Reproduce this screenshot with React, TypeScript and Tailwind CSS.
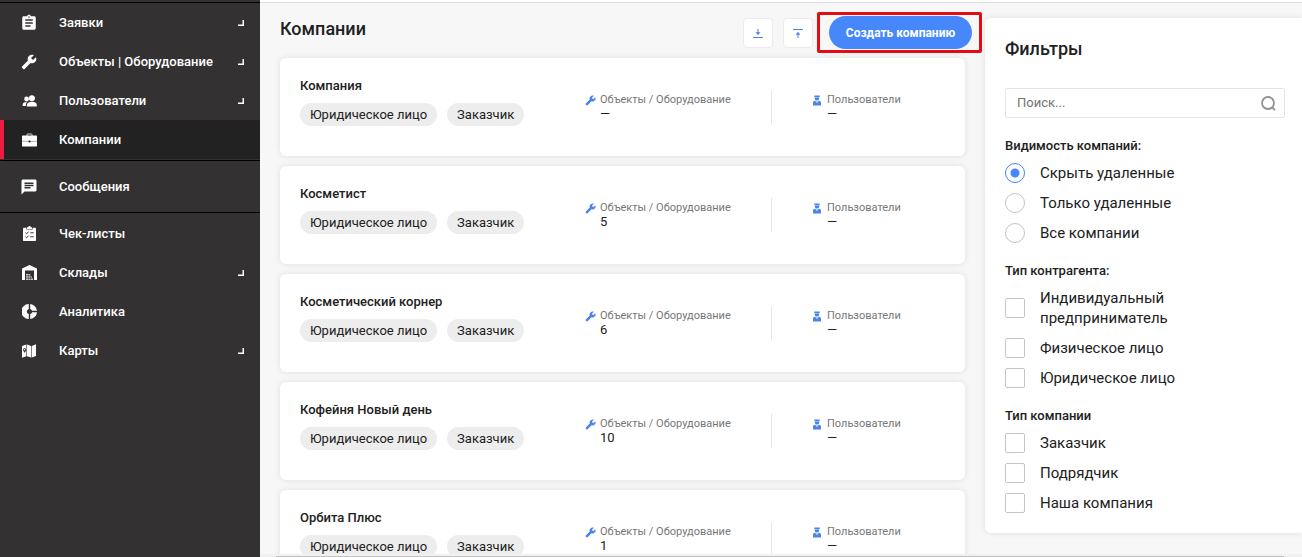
import React from "react";
import { MdAssignment, MdBuild, MdChat } from "react-icons/md";

function PeopleIcon() {
  return (
    <svg viewBox="0 0 15 12" className="h-3 w-[15px]" fill="currentColor" aria-hidden="true">
      <circle cx="4.6" cy="4" r="2.4" />
      <circle cx="9.9" cy="3.3" r="3" />
      <path d="M5 7.1C2.600 6.700.7 8 .7 9.500V11h3.200c0-1.800.2-2.900 1.100-3.900z" />
      <path d="M4.900 11.500V10c0-2 2.300-3.200 5-3.200s4.900 1.200 4.900 3.200v1.500z" />
    </svg>
  );
}

function BriefcaseIcon() {
  return (
    <svg viewBox="0 0 15 14" className="h-[14px] w-[15px]" aria-hidden="true">
      <path fill="none" stroke="currentColor" strokeOpacity=".8" d="M4.900 3V1.800c0-.5.300-.8.800-.8h3.600c.5 0 .8.300.8.800V3" />
      <path fill="currentColor" d="M1 2.500h13c.600 0 1 .4 1 1v9c0 .6-.4 1-1 1H1c-.600 0-1-.4-1-1v-9c0-.6.400-1 1-1z" />
      <path stroke="#222222" strokeOpacity=".5" strokeWidth=".7" d="M0 8.300h15" />
      <circle cx="7.500" cy="8.500" r="1.100" fill="#222222" />
    </svg>
  );
}

function ChecklistIcon() {
  return (
    <svg viewBox="0 0 13 15" className="h-[15px] w-[13px]" aria-hidden="true">
      <path fill="currentColor" d="M1 1.800h2.400V3.500h6.200V1.800H12c.600 0 1 .4 1 1V14c0 .6-.4 1-1 1H1c-.600 0-1-.4-1-1V2.800c0-.6.400-1 1-1z" />
      <path fill="currentColor" d="M4 2.900V1.300h1.200C5.300.5 5.800 0 6.500 0s1.200.5 1.300 1.300H9v1.600z" />
      <path fill="none" stroke="#333132" strokeWidth="1" d="M2.400 6.700l1.200 1.100 2-2.200M2.400 10.700l1.200 1.100 2-2.200M7.300 6.800h3.400M7.300 10.800h3.400" />
    </svg>
  );
}

function WarehouseIcon() {
  return (
    <svg viewBox="0 0 15 15" className="size-[15px]" fill="currentColor" aria-hidden="true">
      <path d="M0 15V3.500L7.500 0 15 3.500V15h-3V5.600H3V15z" />
      <path d="M4 9h2v1.600H4zM4 11.200h2v1.600H4zM4 13.400h2V15H4zM6.400 9h1.900v1.600H6.400zM6.400 11.200h1.900v1.600H6.400zM6.400 13.400h1.900V15H6.400zM8.800 11.200h1v1.600h-1zM8.800 13.400H11V15H8.800z" opacity=".75" />
    </svg>
  );
}

function DonutIcon() {
  return (
    <svg viewBox="0 0 15 15" className="size-[15px]" fill="currentColor" aria-hidden="true">
      <path d="M6.800 0v4.900a2.700 2.700 0 0 0 0 5.200V15A7.500 7.500 0 0 1 6.800 0z" />
      <path d="M8.200 0A7.500 7.500 0 0 1 15 6.800h-4.900a2.700 2.700 0 0 0-1.900-1.900z" />
      <path d="M15 8.200A7.500 7.500 0 0 1 8.200 15v-4.900a2.700 2.700 0 0 0 1.900-1.900z" />
    </svg>
  );
}

function MapIcon() {
  return (
    <svg viewBox="0 0 14 14" className="size-[14px]" aria-hidden="true">
      <path fill="currentColor" d="M0 2L4.400.5v11.700L0 13.700zM5 .5l4.200 1.400v11.700L5 12.200zM9.800 1.900L14 .3v11.800l-4.200 1.500z" />
      <path fill="#333132" d="M2.600 4.200c.9 0 1.500.7 1.500 1.500 0 1.100-1.500 3-1.500 3S1.100 6.800 1.100 5.700c0-.8.600-1.500 1.500-1.500z" />
      <circle cx="2.600" cy="5.700" r=".6" fill="currentColor" />
    </svg>
  );
}

function WorkerIcon() {
  return (
    <svg viewBox="0 0 8 11" className="h-[11px] w-2" fill="#4a84ea" aria-hidden="true">
      <path d="M1.400.500h5.200v1.700H1.400z" />
      <path d="M1.800 2.500h4.400v.9a2.200 2.200 0 0 1-4.400 0z" />
      <path d="M0 10.500V7.800c0-1.200.9-2 2.200-2L4 8l1.800-2.200c1.300 0 2.200.8 2.200 2v2.700z" />
      <path d="M3.400 5.900h1.200L4 7z" />
    </svg>
  );
}

function CornerIcon() {
  return (
    <svg viewBox="0 0 6 6" className="size-[6px]" fill="none" stroke="currentColor" strokeWidth="1.500" aria-hidden="true">
      <path d="M0 5.250h5.250V0" />
    </svg>
  );
}

function TransferIcon({ up = false }: { up?: boolean }) {
  return (
    <svg viewBox="0 0 10 9" className="h-[9px] w-[10px]" fill="none" stroke="#4b83e8" aria-hidden="true">
      {up ? (
        <>
          <path d="M0 .5h10M5 9V4" />
          <path fill="#4b83e8" stroke="none" d="M5 2.800L7.400 5.700H2.600z" />
        </>
      ) : (
        <>
          <path d="M0 8.500h10M5 0v5" />
          <path fill="#4b83e8" stroke="none" d="M5 6.200L7.400 3.300H2.600z" />
        </>
      )}
    </svg>
  );
}

type NavEntry = { label: string; icon: React.ReactNode; expandable?: boolean; active?: boolean };

const primary: NavEntry[] = [
  { label: "Заявки", icon: <MdAssignment size={18} />, expandable: true },
  { label: "Объекты | Оборудование", icon: <MdBuild size={16} className="-scale-x-100" />, expandable: true },
  { label: "Пользователи", icon: <PeopleIcon />, expandable: true },
  { label: "Компании", icon: <BriefcaseIcon />, active: true },
];
const messages: NavEntry[] = [{ label: "Сообщения", icon: <MdChat size={18} /> }];
const secondary: NavEntry[] = [
  { label: "Чек-листы", icon: <ChecklistIcon /> },
  { label: "Склады", icon: <WarehouseIcon />, expandable: true },
  { label: "Аналитика", icon: <DonutIcon /> },
  { label: "Карты", icon: <MapIcon />, expandable: true },
];

function NavList({ items }: { items: NavEntry[] }) {
  return (
    <ul>
      {items.map((item) => (
        <li key={item.label}>
          <a
            href="#"
            aria-current={item.active ? "page" : undefined}
            className={
              item.active
                ? "flex h-[39px] items-center border-l-4 border-[#f0193f] bg-[#222222] pr-4"
                : "flex h-[39px] items-center border-l-4 border-transparent pr-4"
            }
          >
            <span className="ml-4 flex w-[18px] justify-center">{item.icon}</span>
            <span className="ml-[21px] flex-1">{item.label}</span>
            {item.expandable && <CornerIcon />}
          </a>
        </li>
      ))}
    </ul>
  );
}

const companies = [
  { name: "Компания", objects: "—" },
  { name: "Косметист", objects: "5" },
  { name: "Косметический корнер", objects: "6" },
  { name: "Кофейня Новый день", objects: "10" },
  { name: "Орбита Плюс", objects: "1" },
];

function Stat({ icon, label, value }: { icon: React.ReactNode; label: string; value: string }) {
  return (
    <div className="flex gap-[5px]">
      <span className="flex h-[14px] w-[10px] items-center justify-center">{icon}</span>
      <div>
        <div className="text-[11px] leading-[14px] whitespace-nowrap text-[#777777]">{label}</div>
        <div className="text-[13px] leading-[14px]">{value}</div>
      </div>
    </div>
  );
}

function CompanyCard({ name, objects }: { name: string; objects: string }) {
  return (
    <li className="grid h-[98px] shrink-0 grid-cols-[285fr_187fr_173fr] items-center rounded-md bg-white px-5 shadow-[0_0_6px_rgba(0,0,0,0.1)]">
      <div className="self-start pt-5">
        <h2 className="text-[13px] leading-4 font-medium">{name}</h2>
        <div className="mt-[9px] flex gap-[10px] text-[13px] leading-[23px] whitespace-nowrap">
          <span className="rounded-full bg-[#ededed] px-[10px]">Юридическое лицо</span>
          <span className="rounded-full bg-[#ededed] px-[10px]">Заказчик</span>
        </div>
      </div>
      <div className="flex h-[34px] items-center border-r border-[#e8e8e8]">
        <Stat
          icon={<MdBuild size={11} color="#4a84ea" className="shrink-0 -scale-x-100" />}
          label="Объекты / Оборудование"
          value={objects}
        />
      </div>
      <div className="pl-10">
        <Stat icon={<WorkerIcon />} label="Пользователи" value="—" />
      </div>
    </li>
  );
}

function FilterGroup({
  title,
  type,
  options,
  checked,
}: {
  title: string;
  type: "radio" | "checkbox";
  options: string[];
  checked?: string;
}) {
  return (
    <fieldset className="mt-5">
      <legend className="text-[13px] leading-[15px] font-medium">{title}</legend>
      <div className="mt-[10px] flex flex-col gap-[10px]">
        {options.map((option) => (
          <label key={option} className="flex items-center gap-[15px] text-[15px] leading-5">
            <input
              type={type}
              name={title}
              defaultChecked={option === checked}
              className={
                type === "radio"
                  ? "size-5 shrink-0 appearance-none rounded-full border border-[#c4c4c4] bg-white checked:border-[#4285f4] checked:bg-[radial-gradient(circle,#4688fb_4px,white_5px)]"
                  : "size-5 shrink-0 appearance-none rounded-xs border border-[#c4c4c4] bg-white checked:bg-[#4285f4]"
              }
            />
            <span className="max-w-[200px]">{option}</span>
          </label>
        ))}
      </div>
    </fieldset>
  );
}

export default function App() {
  return (
    <div className="relative flex h-screen overflow-hidden bg-[#f7f7f7] font-[Roboto,sans-serif] text-[#212121]">
      <nav className="w-[260px] shrink-0 bg-[#333132] pt-[2px] text-[13px] font-medium text-white">
        <div className="border-t border-black pb-px">
          <NavList items={primary} />
        </div>
        <div className="border-y border-black py-[6px]">
          <NavList items={messages} />
        </div>
        <div className="pt-px">
          <NavList items={secondary} />
        </div>
      </nav>

      <div className="flex min-w-0 flex-1 flex-col">
        <div className="h-[3px] shrink-0 border-b border-[#e0e0e0] bg-white" />
        <div className="flex min-h-0 flex-1 items-start gap-5 pl-5">
          <main className="min-w-0 flex-1">
            <header className="flex h-[55px] items-start gap-[10px]">
              <h1 className="flex-1 pt-[15px] text-[18px] leading-[22px] font-medium">Компании</h1>
              <button
                type="button"
                aria-label="Скачать"
                className="mt-[15px] flex size-[30px] items-center justify-center rounded-sm border border-[#ebebeb] bg-white"
              >
                <TransferIcon />
              </button>
              <button
                type="button"
                aria-label="Загрузить"
                className="mt-[15px] flex size-[30px] items-center justify-center rounded-sm border border-[#ebebeb] bg-white"
              >
                <TransferIcon up />
              </button>
              <div className="relative mt-[13px] -mr-[7px] ml-[6px]">
                <button
                  type="button"
                  className="h-[33px] w-[143px] rounded-full bg-[#4688fb] text-[12px] font-bold whitespace-nowrap text-white"
                >
                  Создать компанию
                </button>
                <span className="pointer-events-none absolute -top-1 -right-[10px] -bottom-1 -left-3 rounded-xs border-3 border-[#e50b12]" />
              </div>
            </header>
            <ul className="flex flex-col gap-[10px]">
              {companies.map((company) => (
                <CompanyCard key={company.name} {...company} />
              ))}
            </ul>
          </main>

          <aside className="mt-[15px] w-[317px] shrink-0 rounded-l-md bg-white pt-5 pr-[17px] pb-5 pl-5 shadow-[0_0_6px_rgba(0,0,0,0.1)]">
            <h2 className="text-[18px] leading-[22px] font-medium">Фильтры</h2>
            <label className="mt-7 flex h-[30px] items-center rounded-xs border border-[#e5e5e5] pr-2 pl-[11px]">
              <input
                type="text"
                aria-label="Поиск"
                placeholder="Поиск..."
                className="min-w-0 flex-1 text-[13px] outline-none placeholder:text-[#757575]"
              />
              <svg viewBox="0 0 15 15" className="size-[15px]" fill="none" stroke="#939393" strokeWidth="1.8" aria-hidden="true">
                <circle cx="7" cy="7" r="6" />
                <path d="M10.800 11l3.200 3" />
              </svg>
            </label>
            <FilterGroup
              title="Видимость компаний:"
              type="radio"
              options={["Скрыть удаленные", "Только удаленные", "Все компании"]}
              checked="Скрыть удаленные"
            />
            <FilterGroup
              title="Тип контрагента:"
              type="checkbox"
              options={["Индивидуальный предприниматель", "Физическое лицо", "Юридическое лицо"]}
            />
            <FilterGroup
              title="Тип компании"
              type="checkbox"
              options={["Заказчик", "Подрядчик", "Наша компания"]}
            />
          </aside>
        </div>
      </div>

      <div className="absolute right-0 bottom-0 left-[260px] flex h-[3px] items-end bg-[#f1f1f1] pr-[18px] pl-4">
        <div className="h-px flex-1 bg-[#c1c1c1]" />
      </div>
    </div>
  );
}
